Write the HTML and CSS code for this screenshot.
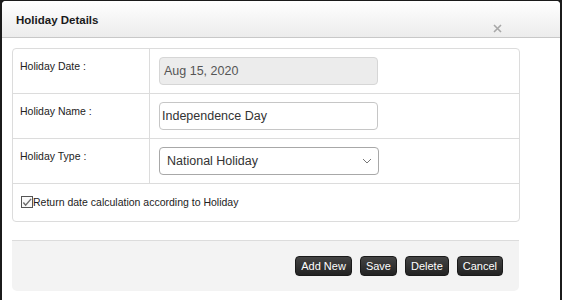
FILE: index.html
```html
<!DOCTYPE html>
<html lang="en">
<head>
    <meta charset="UTF-8">
    <title>Holiday Details</title>
    <link rel="stylesheet" href="styles.css">
</head>
<body>
    <div class="dialog">
        <div class="dialog-header">
            <h2 class="dialog-title">Holiday Details</h2>
            <span class="close-btn">
                <svg width="9" height="9" viewBox="0 0 9 9"><path d="M1 1L8 8M8 1L1 8" stroke="#a8a8a8" stroke-width="1.6"/></svg>
            </span>
        </div>
        <div class="dialog-body">
            <div class="form-box">
                <div class="form-row">
                    <div class="form-label">Holiday Date :</div>
                    <div class="form-field">
                        <div class="text-input disabled">Aug 15, 2020</div>
                    </div>
                </div>
                <div class="form-row">
                    <div class="form-label">Holiday Name :</div>
                    <div class="form-field">
                        <div class="text-input">Independence Day</div>
                    </div>
                </div>
                <div class="form-row">
                    <div class="form-label">Holiday Type :</div>
                    <div class="form-field">
                        <div class="text-input select">
                            <span class="select-value">National Holiday</span>
                            <svg width="10" height="6" viewBox="0 0 10 6"><path d="M1 1L5 5L9 1" fill="none" stroke="#777" stroke-width="1"/></svg>
                        </div>
                    </div>
                </div>
                <div class="form-row check-row">
                    <span class="checkbox">
                        <svg width="11" height="11" viewBox="0 0 11 11"><path d="M1.5 5.5L4 8.5L10 1.5" fill="none" stroke="#6e6e6e" stroke-width="1.6"/></svg>
                    </span>
                    <span class="check-label">Return date calculation according to Holiday</span>
                </div>
            </div>
            <div class="dialog-footer">
                <button class="btn">Add New</button>
                <button class="btn">Save</button>
                <button class="btn">Delete</button>
                <button class="btn">Cancel</button>
            </div>
        </div>
    </div>
</body>
</html>
```
FILE: styles.css
```css
html, body {
    margin: 0;
    padding: 0;
    background: #1b1b1b;
    font-family: 'Liberation Sans', Arial, sans-serif;
    color: #222;
}
.dialog {
    margin: 1px 2px 0 2px;
    width: 558px;
    height: 299px;
    background: #fff;
    border-radius: 4px 4px 0 0;
}
.dialog-header {
    display: flex;
    justify-content: space-between;
    height: 36px;
    padding: 0 58px 0 14px;
    background: linear-gradient(#ffffff, #ececec);
    border-bottom: 1px solid #c8c8c8;
    border-radius: 4px 4px 0 0;
}
.dialog-title {
    margin: 0;
    font-size: 11.5px;
    font-weight: bold;
    line-height: 38px;
    color: #1a1a1a;
}
.close-btn {
    display: flex;
    align-self: flex-end;
    margin-bottom: 4px;
}
.dialog-body {
    padding: 10px 0 0 10px;
}
.form-box {
    width: 506px;
    border: 1px solid #dcdcdc;
    border-radius: 4px;
}
.form-row {
    display: grid;
    grid-template-columns: 137px 1fr;
    height: 44px;
    border-bottom: 1px solid #dcdcdc;
}
.form-label {
    border-right: 1px solid #dcdcdc;
    padding: 11px 0 0 7px;
    font-size: 10.5px;
}
.form-field {
    padding: 8px 0 0 9px;
}
.text-input {
    box-sizing: border-box;
    width: 219px;
    height: 28px;
    border: 1px solid #c6c6c6;
    border-radius: 4px;
    padding: 0 6px 0 2px;
    display: flex;
    align-items: center;
    font-size: 12.5px;
    color: #333;
    background: #fff;
}
.text-input.disabled {
    background: #ececec;
    border-color: #d6d6d6;
    color: #555;
    padding-left: 4px;
}
.text-input.select {
    justify-content: space-between;
    padding: 0 6px 0 7px;
    border-color: #a8a8a8;
    width: 220px;
}
.check-row {
    display: flex;
    align-items: center;
    height: 36px;
    border-bottom: none;
    padding-left: 8px;
    padding-bottom: 1px;
}
.checkbox {
    box-sizing: border-box;
    width: 12px;
    height: 12px;
    border: 1px solid #555;
    background: #fafafa;
    display: flex;
    align-items: center;
    justify-content: center;
}
.check-label {
    font-size: 10.5px;
}
.dialog-footer {
    width: 491px;
    margin-top: 18px;
    height: 35px;
    padding: 15px 16px 0 0;
    background: #f3f3f3;
    border-top: 1px solid #dcdcdc;
    border-radius: 0 0 5px 5px;
    display: flex;
    justify-content: flex-end;
    gap: 8px;
    align-items: flex-start;
}
.btn {
    height: 20px;
    padding: 0 5px;
    border: 1px solid #1a1a1a;
    border-radius: 4px;
    background: linear-gradient(#444, #222);
    color: #fff;
    font-family: 'Liberation Sans', Arial, sans-serif;
    font-size: 11px;
    line-height: 18px;
}
```
